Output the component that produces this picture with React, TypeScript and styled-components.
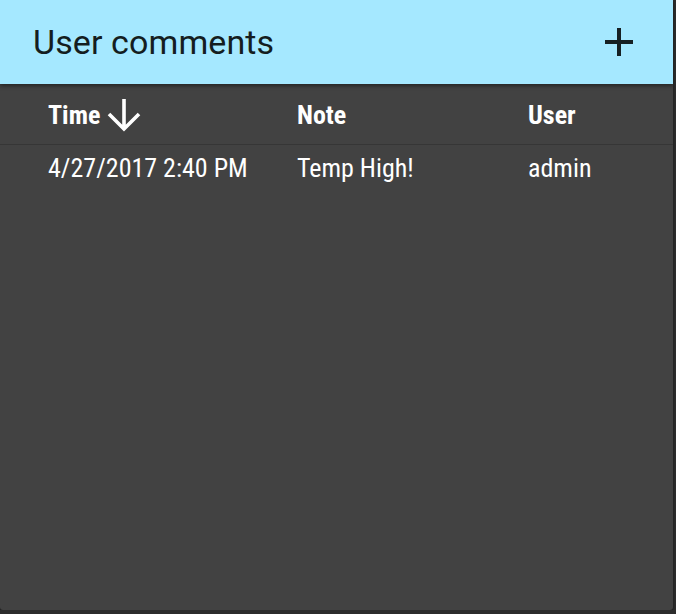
import React from 'react';
import styled, { createGlobalStyle } from 'styled-components';

const GlobalStyle = createGlobalStyle`
  html, body {
    margin: 0;
    padding: 0;
    background: #2c2c2c;
  }
  body {
    font-family: "Roboto Condensed", Roboto, "Liberation Sans", sans-serif;
  }
`;

const Card = styled.section`
  width: 673px;
  height: 610px;
  background: #424242;
  border-radius: 0 0 3px 3px;
  box-shadow: 0 1px 3px rgba(0, 0, 0, 0.5);
  display: flex;
  flex-direction: column;
  overflow: hidden;
`;

const Header = styled.header`
  height: 84px;
  flex: none;
  display: flex;
  align-items: center;
  justify-content: space-between;
  padding: 0 38px 0 33px;
  background: #a5e8ff;
  box-shadow: 0 2px 4px rgba(0, 0, 0, 0.45);
  position: relative;
  z-index: 1;
`;

const Title = styled.h1`
  margin: 0;
  font-family: Roboto, "Liberation Sans", sans-serif;
  font-size: 34px;
  font-weight: 400;
  color: #141d20;
  letter-spacing: 0.1px;
`;

const IconButton = styled.button`
  border: 0;
  padding: 0;
  background: transparent;
  width: 32px;
  height: 32px;
  display: flex;
  align-items: center;
  justify-content: center;
  cursor: pointer;
`;

const Table = styled.table`
  width: 100%;
  border-collapse: collapse;
  color: #ffffff;
  font-size: 26px;
`;

const HeadCell = styled.th<{ $w: number }>`
  width: ${({ $w }) => $w}px;
  text-align: left;
  font-weight: 700;
  height: 58px;
  padding: 2px 0 0;
  vertical-align: middle;
  border-bottom: 1px solid #363636;
`;

const HeadInner = styled.span`
  display: inline-flex;
  align-items: center;
  gap: 7px;
`;

const Cell = styled.td`
  height: 46px;
  padding: 0 0 4px;
  vertical-align: middle;
  font-weight: 400;
  white-space: nowrap;
`;

const Gutter = styled.td`
  width: 48px;
  padding: 0;
`;

const GutterHead = styled.th`
  width: 48px;
  padding: 0;
  border-bottom: 1px solid #363636;
`;

const rows = [{ time: '4/27/2017 2:40 PM', note: 'Temp High!', user: 'admin' }];

export default function App() {
  return (
    <>
      <GlobalStyle />
      <Card>
        <Header>
          <Title>User comments</Title>
          <IconButton aria-label="Add comment">
            <svg width="28" height="28" viewBox="0 0 28 28">
              <path d="M14 0v28M0 14h28" stroke="#162023" strokeWidth="4" />
            </svg>
          </IconButton>
        </Header>
        <Table>
          <thead>
            <tr>
              <GutterHead />
              <HeadCell $w={249}>
                <HeadInner>
                  Time
                  <svg width="34" height="34" viewBox="0 0 34 34">
                    <path
                      d="M17 1v30M2 16l15 15 15-15"
                      stroke="#ffffff"
                      strokeWidth="3.6"
                      fill="none"
                    />
                  </svg>
                </HeadInner>
              </HeadCell>
              <HeadCell $w={231}>Note</HeadCell>
              <HeadCell $w={145}>User</HeadCell>
            </tr>
          </thead>
          <tbody>
            {rows.map((r) => (
              <tr key={r.time}>
                <Gutter />
                <Cell>{r.time}</Cell>
                <Cell>{r.note}</Cell>
                <Cell>{r.user}</Cell>
              </tr>
            ))}
          </tbody>
        </Table>
      </Card>
    </>
  );
}
